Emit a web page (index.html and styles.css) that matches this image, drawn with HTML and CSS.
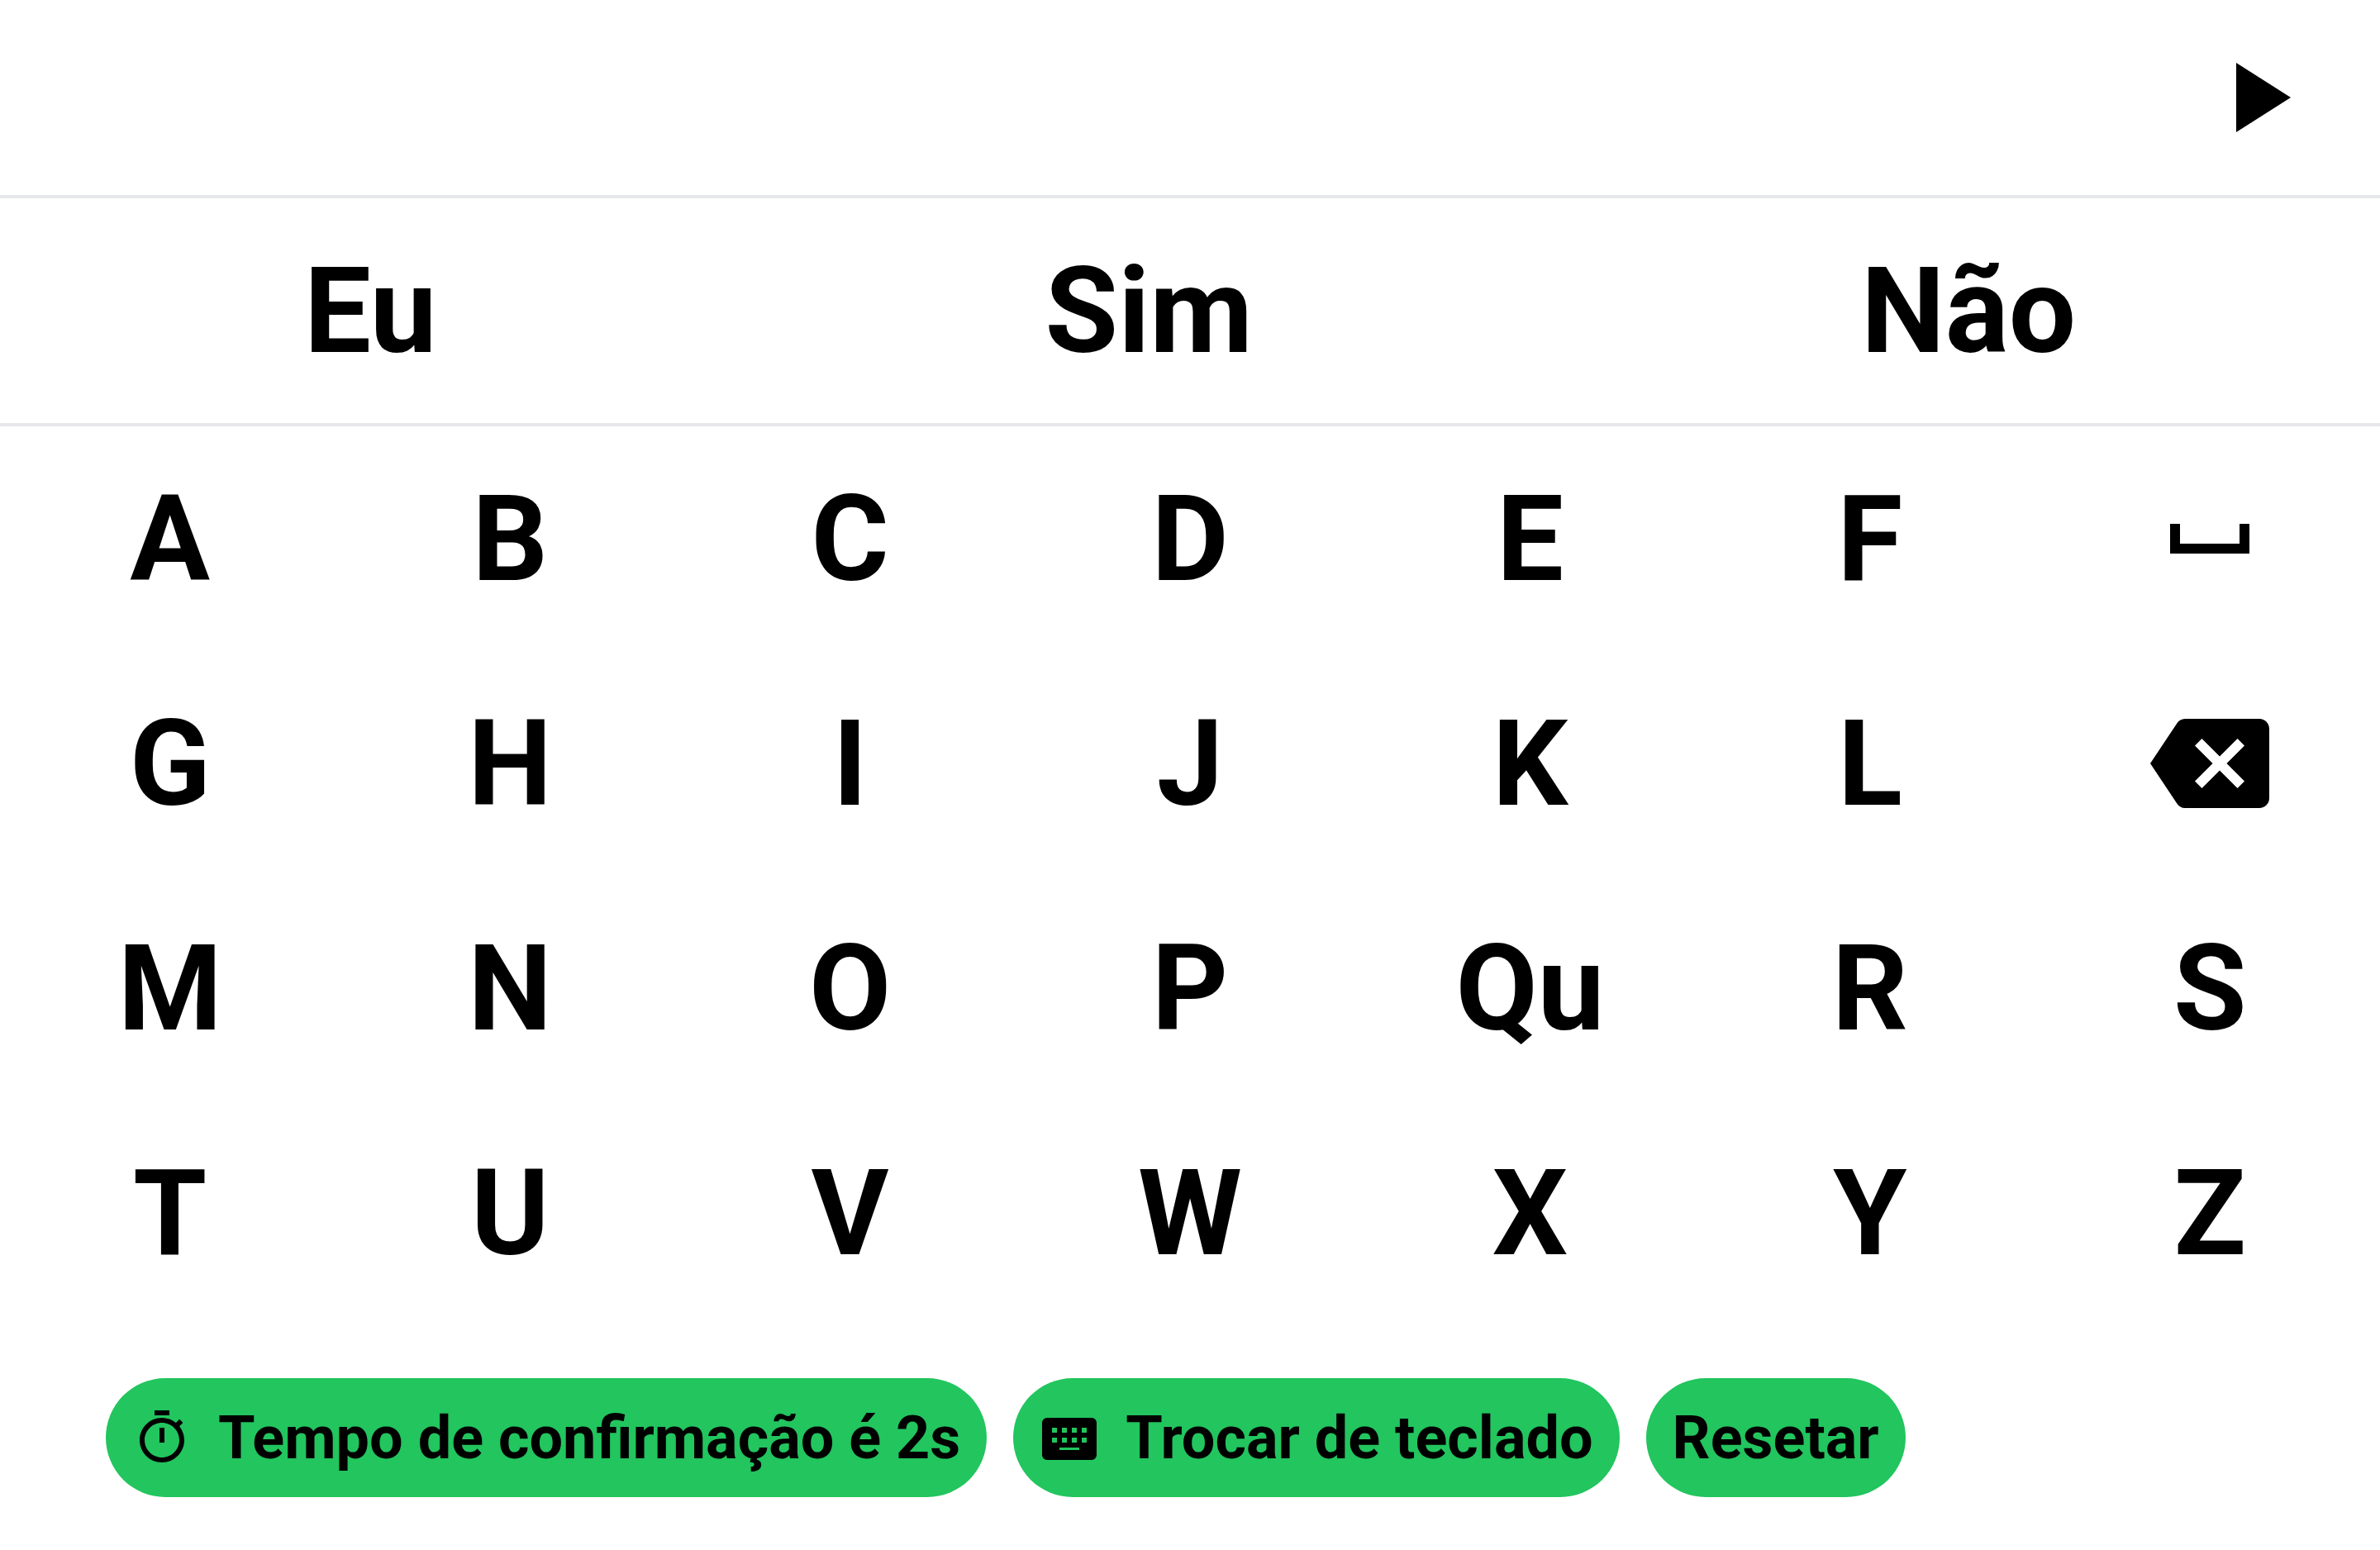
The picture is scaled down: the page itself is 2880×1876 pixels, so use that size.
FILE: index.html
```
<!DOCTYPE html>
<html lang="pt-BR">
<head>
<meta charset="utf-8">
<meta name="viewport" content="width=device-width, initial-scale=1">
<title>Teclado</title>
<link rel="stylesheet" href="styles.css">
</head>
<body>
<main class="app">
  <header class="message">
    <input class="message-text" type="text" aria-label="Mensagem">
    <button class="key play" type="button" aria-label="Falar">
      <svg class="icon" viewBox="0 0 24 24" fill="currentColor"><path d="M8 5v14l11-7z"/></svg>
    </button>
  </header>
  <section class="suggestions">
    <button class="key" type="button">Eu</button>
    <button class="key" type="button">Sim</button>
    <button class="key" type="button">Não</button>
  </section>
  <section class="keyboard">
    <button class="key" type="button">A</button>
    <button class="key" type="button">B</button>
    <button class="key" type="button">C</button>
    <button class="key" type="button">D</button>
    <button class="key" type="button">E</button>
    <button class="key" type="button">F</button>
    <button class="key" type="button" aria-label="Espaço">
      <svg class="icon" viewBox="0 0 24 24" fill="currentColor"><path d="M18 9v4H6V9H4v6h16V9z"/></svg>
    </button>
    <button class="key" type="button">G</button>
    <button class="key" type="button">H</button>
    <button class="key" type="button">I</button>
    <button class="key" type="button">J</button>
    <button class="key" type="button">K</button>
    <button class="key" type="button">L</button>
    <button class="key" type="button" aria-label="Apagar">
      <svg class="icon" viewBox="0 0 24 24" fill="currentColor"><path d="M22 3H7c-.69 0-1.230.35-1.590.88L0 12l5.410 8.110c.36.53.9.89 1.590.89h15c1.100 0 2-.9 2-2V5c0-1.100-.9-2-2-2zm-3 12.590L17.590 17 14 13.410 10.410 17 9 15.590 12.590 12 9 8.410 10.410 7 14 10.590 17.590 7 19 8.410 15.410 12 19 15.590z"/></svg>
    </button>
    <button class="key" type="button">M</button>
    <button class="key" type="button">N</button>
    <button class="key" type="button">O</button>
    <button class="key" type="button">P</button>
    <button class="key" type="button">Qu</button>
    <button class="key" type="button">R</button>
    <button class="key" type="button">S</button>
    <button class="key" type="button">T</button>
    <button class="key" type="button">U</button>
    <button class="key" type="button">V</button>
    <button class="key" type="button">W</button>
    <button class="key" type="button">X</button>
    <button class="key" type="button">Y</button>
    <button class="key" type="button">Z</button>
  </section>
  <footer class="actions">
    <button class="pill" type="button">
      <svg class="pill-icon" viewBox="0 0 24 24" fill="currentColor"><path d="M15 1H9v2h6V1zm-4 13h2V8h-2v6zm8.030-6.610l1.420-1.420c-.43-.51-.9-.99-1.410-1.410l-1.420 1.420C16.070 4.740 14.120 4 12 4c-4.970 0-9 4.030-9 9s4.020 9 9 9 9-4.030 9-9c0-2.120-.74-4.070-1.970-5.610zM12 20c-3.870 0-7-3.130-7-7s3.130-7 7-7 7 3.130 7 7-3.130 7-7 7z"/></svg>
      Tempo de confirmação é 2s
    </button>
    <button class="pill" type="button">
      <svg class="pill-icon" viewBox="0 0 24 24" fill="currentColor" fill-rule="evenodd"><path d="M3 4h18a2 2 0 0 1 2 2v13a2 2 0 0 1-2 2H3a2 2 0 0 1-2-2V6a2 2 0 0 1 2-2zM5 8v2h2V8zM9 8v2h2V8zM13 8v2h2V8zM17 8v2h2V8zM5 12v2h2v-2zM9 12v2h2v-2zM13 12v2h2v-2zM17 12v2h2v-2zM8 16v1h8v-1z"/></svg>
      Trocar de teclado
    </button>
    <button class="pill" type="button">Resetar</button>
  </footer>
</main>
</body>
</html>
```
FILE: styles.css
```
* {
  box-sizing: border-box;
}

body {
  margin: 0;
  background: #fff;
  color: #000;
  font-family: Roboto, sans-serif;
}

button,
input {
  margin: 0;
  padding: 0;
  border: 0;
  background: none;
  color: inherit;
  font: inherit;
}

.app {
  display: flex;
  flex-direction: column;
  min-height: 100vh;
}

.message,
.suggestions {
  display: flex;
  border-bottom: 4px solid #e5e7eb;
}

.message {
  height: 240px;
}

.message-text {
  flex: 1;
  min-width: 0;
  padding: 0 48px;
  font-size: 144px;
  font-weight: 700;
  outline: 0;
}

.play {
  width: 300px;
}

.suggestions {
  height: 276px;
}

.suggestions .key {
  flex: 1 1 auto;
}

.keyboard {
  display: grid;
  flex: 1;
  grid-template-columns: repeat(7, 1fr);
  grid-auto-rows: 1fr;
}

.key {
  display: flex;
  align-items: center;
  justify-content: center;
  font-size: 144px;
  font-weight: 700;
}

.icon {
  width: 144px;
  height: 144px;
}

.actions {
  display: flex;
  flex-wrap: wrap;
  gap: 32px;
  padding: 64px 128px;
}

.pill {
  display: flex;
  align-items: center;
  gap: 32px;
  height: 144px;
  padding: 0 32px;
  border-radius: 72px;
  background: #22c55e;
  font-size: 72px;
  font-weight: 700;
}

.pill-icon {
  width: 72px;
  height: 72px;
}
```
